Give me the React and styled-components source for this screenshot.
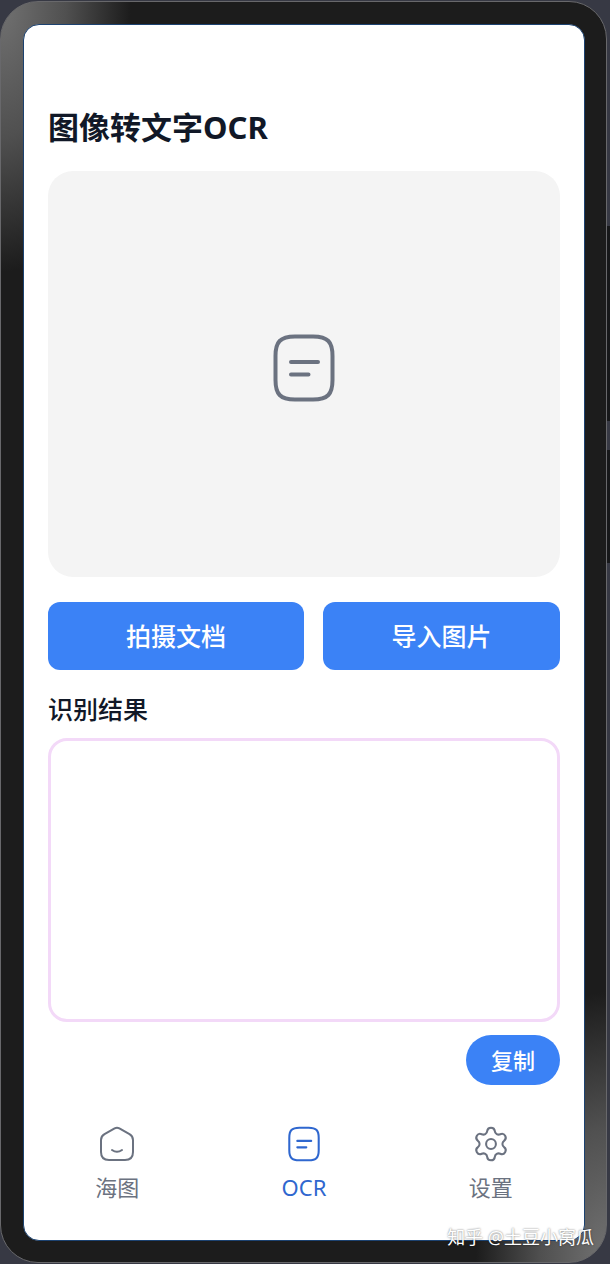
import React from "react"
import styled, { createGlobalStyle } from "styled-components"
import { Settings } from "lucide-react"

const GlobalStyle = createGlobalStyle`
  * {
    box-sizing: border-box;
  }
  body {
    margin: 0;
    background: #373944;
    color: #111827;
    font-family: "Noto Sans", "Noto Sans CJK SC", sans-serif;
  }
  button,
  textarea {
    font-family: inherit;
  }
`

const NoteIcon = ({ width, height, stroke }) => (
  <svg
    width={width}
    height={height}
    viewBox="0 0 62 68"
    fill="none"
    stroke="currentColor"
    strokeWidth={stroke}
    strokeLinecap="round"
    aria-hidden="true"
  >
    <path d="M22 2.500H40C55 2.500 59.500 8 59.500 22V46C59.500 60 55 65.500 40 65.500H22C7 65.500 2.500 60 2.500 46V22C2.500 8 7 2.500 22 2.500Z" />
    <path d="M18 28H45M18 40.500H35.500" />
  </svg>
)

const HomeIcon = () => (
  <svg
    width="36"
    height="36"
    viewBox="0 0 36 36"
    fill="none"
    stroke="currentColor"
    strokeWidth="2"
    strokeLinecap="round"
    strokeLinejoin="round"
    aria-hidden="true"
  >
    <path d="M15.600 2.300Q18 1 20.400 2.300L30.500 8.200Q34 10.300 34 14V26Q34 34 26 34H10Q2 34 2 26V14Q2 10.300 5.500 8.200Z" />
    <path d="M13 24Q18 27.600 23 24" />
  </svg>
)

const App = () => (
  <Desktop>
    <GlobalStyle />
    <Phone>
      <Screen>
        <Content>
          <Title>图像转文字OCR</Title>
          <Preview>
            <NoteIcon width={62} height={68} stroke={4} />
          </Preview>
          <Actions>
            <ActionButton type="button">拍摄文档</ActionButton>
            <ActionButton type="button">导入图片</ActionButton>
          </Actions>
          <ResultLabel htmlFor="result">识别结果</ResultLabel>
          <Result id="result" />
          <CopyButton type="button">复制</CopyButton>
        </Content>
        <TabBar>
          <Tab href="#map">
            <HomeIcon />
            海图
          </Tab>
          <Tab href="#ocr" $active aria-current="page">
            <NoteIcon width={32} height={36} stroke={4} />
            OCR
          </Tab>
          <Tab href="#settings">
            <Settings size={36} viewBox="1 1 22 22" strokeWidth={1.25} />
            设置
          </Tab>
        </TabBar>
      </Screen>
    </Phone>
    <SideKeys>
      <SideKey $height={195} />
      <SideKey $height={113} />
    </SideKeys>
    <Watermark>知乎 @土豆小窝瓜</Watermark>
  </Desktop>
)

export default App

const Desktop = styled.div`
  position: relative;
  display: flex;
  min-height: 100vh;
  padding: 1px 0;
`

const Phone = styled.div`
  flex: 1;
  display: flex;
  padding: 22px 21px 21px 22px;
  border: 1px solid #68686b;
  border-radius: 38px;
  background: radial-gradient(
      130px 270px at 0 0,
      #727272,
      #505050 50%,
      transparent
    ),
    radial-gradient(130px 270px at 100% 100%, #727272, #505050 50%, transparent),
    #1c1c1c;
`

const Screen = styled.main`
  flex: 1;
  display: flex;
  flex-direction: column;
  border: 1px solid #1c4270;
  border-radius: 16px;
  background: #fff;
`

const Content = styled.div`
  flex: 1;
  display: flex;
  flex-direction: column;
  padding: 79px 24px 0;
`

const Title = styled.h1`
  margin: 0 0 21px;
  font-size: 31px;
  line-height: 46px;
  font-weight: 700;
`

const Preview = styled.section`
  display: flex;
  align-items: center;
  justify-content: center;
  height: 406px;
  padding-bottom: 12px;
  border-radius: 25px;
  background: #f4f4f4;
  color: #6b7280;
`

const Actions = styled.div`
  display: grid;
  grid-template-columns: 256fr 237fr;
  gap: 19px;
  margin: 25px 0 20px;
`

const ActionButton = styled.button`
  height: 68px;
  padding: 0 0 2px;
  border: 0;
  border-radius: 12px;
  background: #3b82f6;
  color: #fff;
  font-size: 25px;
  font-weight: 500;
`

const ResultLabel = styled.label`
  margin-bottom: 10px;
  font-size: 25px;
  line-height: 38px;
  font-weight: 500;
`

const Result = styled.textarea`
  flex: 1;
  width: 100%;
  padding: 16px;
  border: 3px solid #f3d9f8;
  border-radius: 19px;
  background: #fff;
  font-size: 22px;
  resize: none;
`

const CopyButton = styled.button`
  align-self: flex-end;
  width: 94px;
  height: 50px;
  margin-top: 13px;
  padding: 0 0 2px;
  border: 0;
  border-radius: 25px;
  background: #3b82f6;
  color: #fff;
  font-size: 22px;
  font-weight: 500;
`

const TabBar = styled.nav`
  display: grid;
  grid-template-columns: repeat(3, 1fr);
  padding: 41px 0 37px;
`

const Tab = styled.a`
  display: flex;
  flex-direction: column;
  align-items: center;
  gap: 9px;
  color: ${props => (props.$active ? "#2f67cf" : "#6b7280")};
  font-size: 22px;
  line-height: 32px;
  text-decoration: none;
`

const SideKeys = styled.div`
  display: flex;
  flex-direction: column;
  gap: 29px;
  width: 3px;
  padding-top: 225px;
`

const SideKey = styled.div`
  height: ${props => props.$height}px;
  background: #17181a;
`

const Watermark = styled.span`
  position: absolute;
  right: 16px;
  bottom: 14px;
  color: #fff;
  font-size: 18px;
  line-height: 26px;
  text-shadow: 0 0 2px rgba(0, 0, 0, 0.6);
`
